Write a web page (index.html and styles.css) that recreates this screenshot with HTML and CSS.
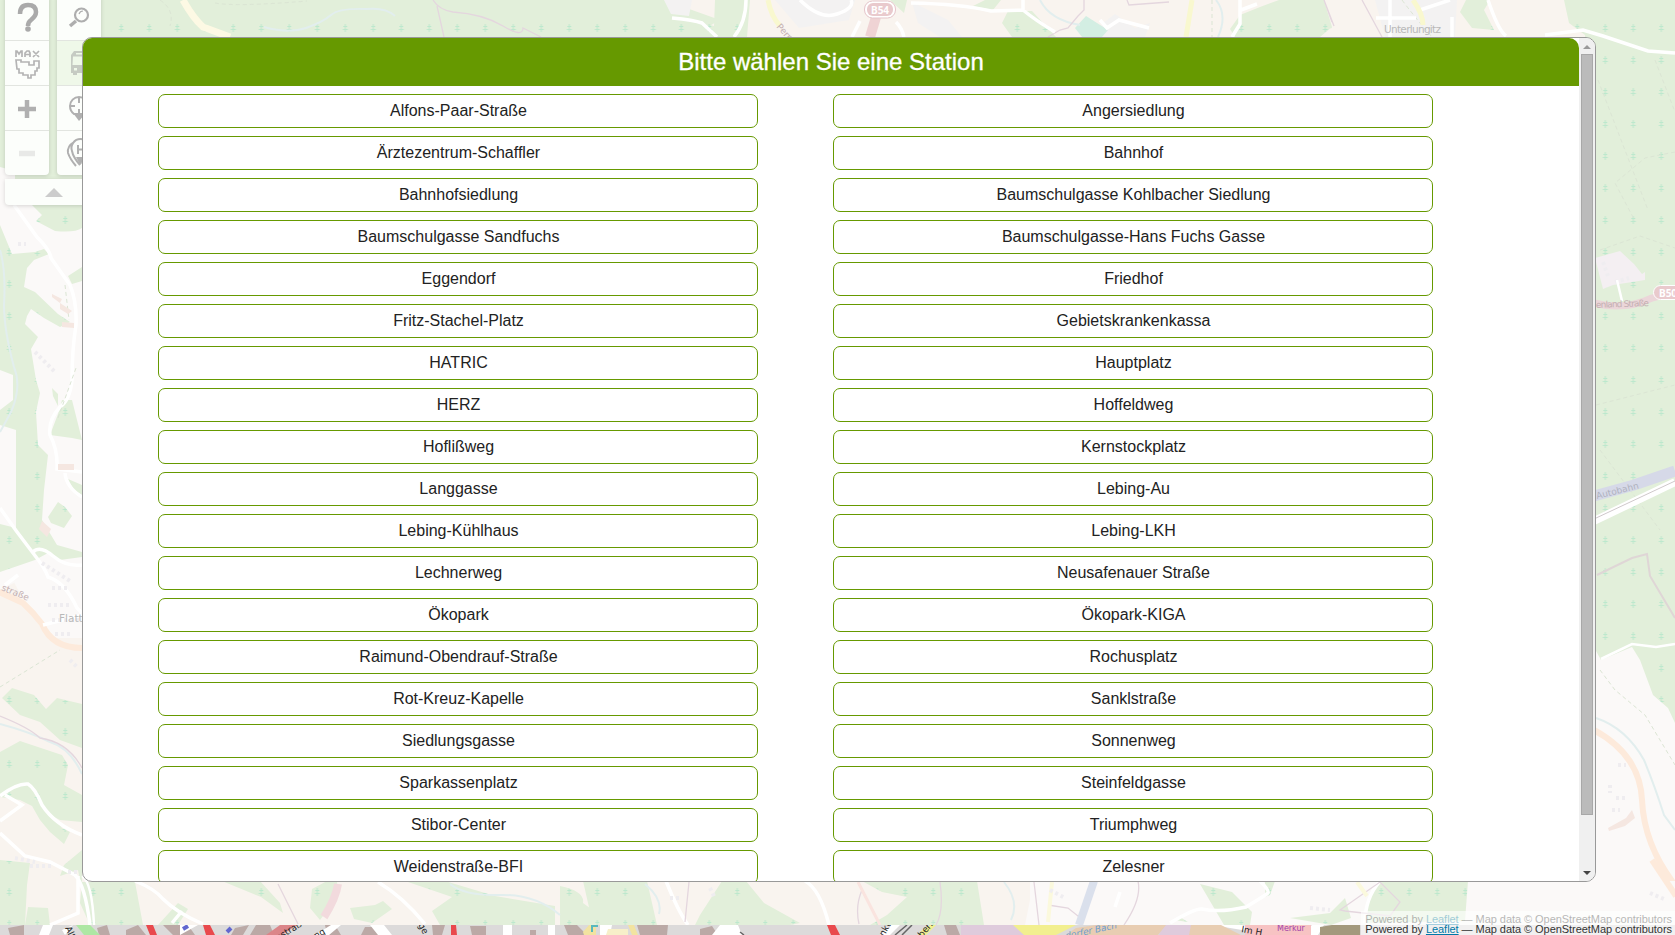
FILE: index.html
```html
<!DOCTYPE html>
<html lang="de">
<head>
<meta charset="utf-8">
<title>Bitte wählen Sie eine Station</title>
<link rel="stylesheet" href="styles.css">
</head>
<body>
<svg class="map" viewBox="0 0 1675 935" width="1675" height="935" aria-hidden="true">
  <defs>
    <pattern id="trees" width="28" height="32" patternUnits="userSpaceOnUse" x="-4.7" y="12">
      <rect width="28" height="32" fill="#e2efda"/>
      <path d="M14 12v8M12 14.500h4M11.500 17.500h5" stroke="#bce8cd" stroke-width="1" fill="none"/>
    </pattern>
    <clipPath id="strip"><rect y="925" width="1675" height="10"/></clipPath>
  </defs>
  <rect width="1675" height="935" fill="#fbf9f8"/>
  <rect y="870" width="1100" height="55" fill="#f9f4ef"/>
  <rect y="590" width="82" height="335" fill="#f9f4f0"/>

  <!-- top edge -->
  <path class="wood" d="M0 0H720L716 30L690 37V60H82V180H0Z"/>
  <path class="field" d="M664 0H1120L1300 0H1566L1572 24L1590 37H690L720 20Z"/>
  <path class="town" d="M664 0l7 14 18 2 3-16zM775 0h80l-6 20-50 8zM912 2l36 18 14 17h-22l-22-14zM1115 14l20 14 15-5-5 14h-48l6-14zM1375 0h82l-2 37h-70z"/>
  <path class="wood" d="M715 0h35l-3 37h-67l12-17 22 6zM907 0l-3 13-14-13zM985 0h16l-8 10-20-4zM1008 11h24l24 26h-44l-10-14zM1240 15l20-8 19-7h45l8 27-12 10h-85l-5-8zM1300 0h22l10 28-32 9zM1466 0h24l-6 10 10 20-22-2-12-16zM1564 0h111v180h-90V35l-16-12z"/>
  <path d="M1086 16l22 14-6 7h-20l-7-9z" fill="#d3eee3"/>
  <path class="path" d="M160 0q15 10 10 26M215 3q20 4 92-2M1402 0q15 20 30 37M1212 0v37"/>
  <path class="water" d="M264 27q25 7 42 1t25-13 35-6q20-2 29 7M1040 0q10 20 40 25M1216 0q12 15 2 37"/>
  <path class="track" d="M433 0q6 10 20 12 30 2 50 14t20 2l18 9M437 6l7 31M1084 0v10l-6 6-10 12-8 2-12 7M1127 0l2 5 40-3M1324 0l10 26M1324 0l8 22M1362 0l20 37"/>
  <path class="road" d="M672 18q22 2 30 5l15 14M746 0q0 22-12 37M860 21l-8 16M800 0q20 20 37 14 18-6 14-14M896 22q6 6 8 15M911 3q50 1 80 8l32-1V0M1023 10q12 10 32 22M1100 20l7 8 12-8 30 8M1240 0v24l-8 13M1241 10l16-6M1376 18h40M1390 0v37M1452 17v20M1420 10l30-10M1488 0q10 30 18 36M1545 35l38-5 20 6 45 15 27 2"/>
  <path d="M183 0q10 18 20 27l27 10" fill="none" stroke="#fdf9e4" stroke-width="7"/>
  <path d="M768 0q3 16 12 26M1192 0l-6 37M1413 0q10 14 10 25" fill="none" stroke="#f9f8cf" stroke-width="5"/>
  <path d="M876 17l-6 20" stroke="#efd3d4" stroke-width="10"/>
  <rect x="864.500" y="1" width="31" height="17" rx="8" fill="#fff" stroke="#e5c5ca"/>
  <rect x="867" y="3" width="26" height="13" rx="6" fill="#e9cacd"/>
  <text class="shield" x="871" y="13.500">B54</text>
  <text class="place" x="1384" y="32.500" textLength="57">Unterlungitz</text>
  <text class="street" x="776" y="27" transform="rotate(48 776 27)">Pernau</text>

  <!-- left edge -->
  <path class="plain" d="M0 167L15 171V205L36 205L43 222L82 240V590H0Z"/>
  <path class="wood" d="M45 205L82 205V228Q75 233 55 231L36 221L42 215L32 205ZM0 225L12 254L35 252L44 249L49 254L34 260L27 268L24 287L35 292L58 314L70 322L60 327L44 318L31 309L27 316L25 324L38 337L31 349L36 380L40 393L36 412L38 445L48 455L44 490L42 520L57 545L82 552V557L60 560L48 553L35 560L0 572V524L16 528V430L0 425V410L13 400V375L0 370ZM82 267L68 276L72 284L82 281ZM82 440L72 400L62 400L58 414L50 435L72 438ZM82 485L68 479L74 490L82 495ZM48 517L58 502L65 507L72 516L64 528L51 523ZM52 388l6 6v12l-5-10z"/>
  <path class="field" d="M0 590l20-10 62 58v287H0z"/>
  <path class="plain" d="M10 575L35 563L82 570V638H48L30 612Z"/>
  <path class="wood" d="M2 698L12 688L34 695L46 709L57 698L82 704V748L60 740L40 722L20 715ZM0 752L20 741L62 755L68 765L64 785L82 795V822L60 820L44 812L30 805L20 800L0 797ZM32 806L46 808L62 828L70 832L64 844L50 832L40 820ZM0 860L30 863L27 885L25 925H0ZM82 850v40L78 870L60 876L64 865Z"/>
  <path class="wood" d="M82 882h53l8 43H90l-10-22zM28 907l20 1 2 17H25z"/>
  <path class="street-major" d="M-5 590L23 603Q33 612 42 624Q52 648 82 648"/>
  <path class="road" d="M14 205L37 237Q50 250 51 258L70 285Q77 302 76 325Q72 350 72 380Q70 400 60 407Q48 420 50 435Q58 450 57 469L82 472M65 473Q66 487 82 497M0 508Q15 530 33 553Q45 568 48 577Q65 582 77 608L82 613M33 552Q40 545 53 556T82 565M5 585l13-10M43 625l39-10M0 796Q17 783 28 784Q35 788 42 805Q55 825 82 835M5 795l17 10-22 16M0 833L25 856 50 862 75 875Q85 885 90 925M78 876v37L50 925"/>
  <path class="road thin" d="M82 876q10 6 12 49"/>
  <path class="water" d="M0 250q6 20 4 55 0 25 10 62 8 20-3 45L0 432M0 724q30 8 50 18 20 6 32 32"/>
  <path class="track" d="M0 716q30 12 40 22 28 4 42 30"/>
  <path class="path" d="M0 687l60-37M58 418l18-50M65 285l4 35"/>
  <path class="house" d="M52 294l10 5-2 4-8-6zM60 303l12 8-4 3-8-5zM62 322l12 1v5l-12-1zM58 464h16v6H58zM42 521l9 8-4 8-8-8z"/>
  <path class="blocks" d="M35 352l20 20M18 244h8M42 563l28 18M52 588h16M48 605h24M52 620h28M55 634h15M70 660l8 8M15 858l20 4M30 866h24M68 872h12"/>
  <text class="street" x="1" y="590" transform="rotate(22 1 590)">straße</text>
  <text class="place" x="59" y="622">Flatte</text>

  <!-- right edge -->
  <path class="wood" d="M1560 60H1675V723L1668 708L1653 695L1640 660L1632 647L1601 660L1590 640Z"/>
  <path class="path" d="M1598 80l50 130M1655 60l20 52M1675 152l-30 6-30 25 20 38M1596 405l79-20M1600 450l60 80M1600 670l15 20 30 25 30 50M1600 250l40-14 35 12"/>
  <path d="M1595 258l25-7 14 13 8 10 3-2v8l-32 5-10 4z" fill="#f4eff2"/>
  <path class="blocks" d="M1603 262l5 14M1615 282l14-4"/>
  <path d="M1617 280l5 21" class="road thin"/>
  <path d="M1594 303q30 8 58-5l23-6" fill="none" stroke="#ebd6d9" stroke-width="7"/>
  <rect x="1653.500" y="285.500" width="34" height="14" rx="7" fill="#e9cacd" stroke="#fff"/>
  <text class="shield" x="1659" y="297">B50</text>
  <text class="street" x="1596" y="307" textLength="53" transform="rotate(-2 1622 305)">enland Straße</text>
  <path d="M1594 521l81-39" stroke="#fff" stroke-width="8"/>
  <path d="M1594 519l81-38" stroke="#cfc8cb"/>
  <path d="M1594 496l40-11 41-14" stroke="#d6d9e8" stroke-width="11" fill="none"/>
  <text class="street motor" x="1597" y="499" transform="rotate(-14 1597 499)">Autobahn</text>
  <path class="track wide" d="M1597 575l35-17 15-4 3 22 25 42"/>
  <path class="road thin" d="M1601 659l31-15 24 3 19-3"/>
  <path class="water" d="M1596 718q30 10 48 42 10 24 20 55l11 15"/>
  <path class="street-major" d="M1594 730Q1640 755 1642 800Q1644 845 1675 885"/>
  <path class="house" d="M1608 828l18-10 6-8 3 8-10 8-16 5z"/>
  <path class="blocks" d="M1610 785v8M1616 798h12M1612 810h8M1618 765h8M1665 893l8-4"/>

  <!-- bottom edge -->
  <path class="wood" d="M222 881h38l20 22 3 10-22-16zM312 889l15-8h10l1 15-18 24-10-12zM158 925l20-22 10 6-10 16zM350 908l25-3 8-4 9 8-20 14-18-4zM405 881h40l50 15 60 10v19H440l-8-14 20-14zM560 886q25 5 23 17l30 22h-53zM583 881h64l10 44h-64zM700 915l22-34h24l18 22 36 20-10 2h-95zM862 881h115l7 44H870l17-10 20-18-25-5zM1200 884l32 8 20 20-2 13h-26zM1155 905l18-3 2 12 13 8-14-2zM1380 881h88l-3 40-100 2q0-26 15-42zM1290 918l40-5 15-15 6 20-20 7zM1265 881h10l-5 14-5 2z"/>
  <path class="plain" d="M1030 881h165l-20 44h-150l5-25zM1470 881h205v44h-205z"/>
  <path class="road" d="M135 881q20 8 28 18 14 14 40 25M378 882q25 15 47 42M666 881q12 30 22 44M805 881q15 8 24 44M1115 907l5-15M1170 923q25-15 32-14 18 4 44-2 20-12 22-14t-8-12M1365 923q0-25 15-42M172 923l10-12"/>
  <path class="track" d="M278 884l20 40M689 882l-4 40M940 882q4 30-4 43M1034 882l5 43M862 890q-7 16-3 34M1138 881q4 18-14 44M1048 905l20 3 15 12M1340 910l40-28 20 20-10 14-45-5z"/>
  <path class="water" d="M450 884q15 12 50 11t60 20M645 884q18 15 14 30M1004 882q16 20 7 38"/>
  <path d="M338 884q-2 14-14 33" fill="none" stroke="#f2dadd" stroke-width="8"/>
  <path d="M858 882l22 43" stroke="#fae4df" stroke-width="3"/>
  <path d="M1094 881l-15 44" stroke="#dae0ec" stroke-width="8"/>
  <path class="street-major" d="M1652 860l24 36"/>
  <path d="M1052 882l-4 40M1357 882l10 14" stroke="#fbf9dd" stroke-width="4"/>
  <path class="blocks" d="M670 898h12M710 888l5 10M1050 890l15 8M1650 893l14 6M1310 908l20 2"/>

  <!-- unveiled strip below the overlay -->
  <g clip-path="url(#strip)">
    <rect y="925" width="1675" height="10" fill="#dcdada"/>
    <path fill="#bba9a6" d="M8 928l16-3v10H10zM97 928l10-3 3 10H99zM126 930l12-5 8 10h-20zM163 925h25l7 10h-22zM235 928l14-3-6 10h-12zM256 925h14l4 10h-24zM325 925h10l6 10h-14zM365 927h20v8h-24zM432 925h13l-3 10h-9zM470 926h16v9h-14zM530 930h6v5h-6zM564 925h13l10 10h-19zM637 925h31l-1 10h-27zM700 929l12-3 6 9h-18zM944 925h12l4 10h-13z"/>
    <path fill="#fff" d="M43 925h10l-4 10H39zM62 930l11-5-8 10zM180 925h18l-18 10zM370 925h14l8 10h-14zM503 925h9v10h-9zM315 935l16-10h10l-12 10zM548 925h7v10h-7zM600 925h12l-2 10h-10zM720 925h18l4 10h-30zM890 925h10l-10 10h-10zM1212 925h30l60 10h-30zM1312 925h12l-6 10h-16z"/>
    <path fill="#aee7a4" d="M76 925h14l10 10H84z"/>
    <path fill="#f2e3a0" d="M583 932l6-7h7v10h-12zM628 925h6l4 10h-6z"/>
    <path fill="#f7efc9" d="M608 929h20v6h-22z"/>
    <path fill="#dfcbdc" d="M961 925h55v10h-55zM1004 925h20l8 10h-28zM1163 925h28v10h-32z"/>
    <path fill="#f2ef8f" d="M1013 925h63l-20 10h-32zM922 930l8-5h6l-10 10h-8z"/>
    <path fill="#e8cdb2" d="M1076 928l20-3h70l-8 10h-92zM1191 925h30l20 10h-52z"/>
    <path fill="#f7c3c3" d="M1245 925h66v10h-66z"/>
    <path fill="#a3997d" d="M1320 927l12-2h28v10h-40z"/>
    <path fill="#e9494d" d="M146 925h7l4 10h-7zM203 925h7l5 10h-9zM451 925h5l1 10h-6zM827 925h8l5 10h-9z"/>
    <path fill="#db8589" d="M280 925h17l-15 10h-16z"/>
    <path fill="none" stroke="#58b8bd" stroke-width="2" d="M592 932v-6h6"/>
    <path fill="none" stroke="#6267cf" stroke-width="4" d="M183 929l5-3M227 932l4-4"/>
    <path fill="none" stroke="#666" stroke-width="1.500" d="M895 935l12-10M902 935l10-10M740 932l4 3"/>
    <text class="ink" x="65" y="928" transform="rotate(65 65 928)">Alt</text>
    <text class="ink" x="278" y="941" transform="rotate(-32 278 941)">nstraß</text>
    <text class="ink" x="316" y="939" transform="rotate(-30 316 939)">ng</text>
    <text class="ink" x="418" y="925" transform="rotate(60 418 925)">ge</text>
    <text class="ink" x="884" y="937" transform="rotate(-60 884 937)">nkt</text>
    <text class="ink" x="922" y="938" transform="rotate(-50 922 938)">bers</text>
    <text class="ink" x="1241" y="932" transform="rotate(10 1241 932)">Im H</text>
    <text class="ink river" x="1066" y="939" transform="rotate(-12 1066 939)">dorfer Bach</text>
    <text class="ink shop" x="1277" y="930.500">Merkur</text>
  </g>
</svg>

<aside class="tools">
  <div class="columns">
    <div class="column">
      <div class="tool"><svg viewBox="0 0 44 44"><path d="M15 18q0-9 8-9t8 7q0 4-5 8-3 2-3 6" fill="none" stroke="#aaa" stroke-width="4.500"/><circle cx="23" cy="33" r="2.800" fill="#aaa"/></svg></div>
      <div class="tool"><svg viewBox="0 0 44 44"><g fill="none" stroke="#b4b4b4" stroke-width="1.700"><path d="M11 16v-6h1l2 3 2-3h1v6M20 16v-4l2-2h2l1 2v4M20 13.500h5M28 10l6 6M34 10l-6 6"/><path d="M11 19h5v2h8v3h5v-4h5v7h-2v3h-2v4h-4v3h-3v-3h-5v-2h-4v-4h-2z"/></g></svg></div>
      <div class="tool"><svg viewBox="0 0 44 44"><path d="M13 23h18M22 14v18" stroke="#b0b0b0" stroke-width="4.500"/></svg></div>
      <div class="tool"><svg viewBox="0 0 44 44"><path d="M14 22.500h16" stroke="#e8e9e7" stroke-width="5.500"/></svg></div>
    </div>
    <div class="column">
      <div class="tool"><svg viewBox="0 0 44 44"><g fill="none" stroke="#aeaeae"><circle cx="24.500" cy="19" r="6.500" stroke-width="2.200"/><path d="M22 18q1-3 4-3" stroke-width="1.200"/><path d="M19 25l-6 5" stroke-width="3.500"/></g></svg></div>
      <div class="tool active"><svg viewBox="0 0 44 44"><path fill="#c6cbc3" fill-rule="evenodd" d="M17 10h16v22h-3v2h-4v-2h-6v2h-4v-2h-2V14zM19 12v1.500h12V12zM16 15.500h16v8.500H15.500zM17 27v2.500h3V27z"/></svg></div>
      <div class="tool"><svg viewBox="0 0 44 44"><path d="M13 20a9 9 0 1 1 18 0q0 5-4 8H17q-4-3-4-8zM22 11v6M13 20h5M22 23v5" fill="none" stroke="#b0b0b0" stroke-width="2"/><path d="M16 27h13l-7 8z" fill="#b0b0b0"/></svg></div>
      <div class="tool"><svg viewBox="0 0 44 44"><g fill="none" stroke="#b0b0b0" stroke-width="2"><path d="M17 11q-7 4-6 11 2 6 8 13M23 34q-7-8-8-14a9 9 0 1 1 17 0q-1 6-7 13"/><path d="M21 14v9M21 18.500h5M26 14v9"/></g><path d="M19 26h10l-6 8z" fill="#b0b0b0"/></svg></div>
    </div>
  </div>
  <div class="collapse"><svg viewBox="0 0 18 9"><path d="M0 9l9-9 9 9z" fill="#ccc"/></svg></div>
</aside>

<footer class="credits">
  <p class="credit veiled">Powered by <a>Leaflet</a> — Map data © OpenStreetMap contributors</p>
  <p class="credit">Powered by <a>Leaflet</a> — Map data © OpenStreetMap contributors</p>
</footer>

<main class="dialog">
  <div class="content">
    <h1 class="title">Bitte wählen Sie eine Station</h1>
    <div class="stations">
      <div class="station">Alfons-Paar-Straße</div><div class="station">Angersiedlung</div>
      <div class="station">Ärztezentrum-Schaffler</div><div class="station">Bahnhof</div>
      <div class="station">Bahnhofsiedlung</div><div class="station">Baumschulgasse Kohlbacher Siedlung</div>
      <div class="station">Baumschulgasse Sandfuchs</div><div class="station">Baumschulgasse-Hans Fuchs Gasse</div>
      <div class="station">Eggendorf</div><div class="station">Friedhof</div>
      <div class="station">Fritz-Stachel-Platz</div><div class="station">Gebietskrankenkassa</div>
      <div class="station">HATRIC</div><div class="station">Hauptplatz</div>
      <div class="station">HERZ</div><div class="station">Hoffeldweg</div>
      <div class="station">Hoflißweg</div><div class="station">Kernstockplatz</div>
      <div class="station">Langgasse</div><div class="station">Lebing-Au</div>
      <div class="station">Lebing-Kühlhaus</div><div class="station">Lebing-LKH</div>
      <div class="station">Lechnerweg</div><div class="station">Neusafenauer Straße</div>
      <div class="station">Ökopark</div><div class="station">Ökopark-KIGA</div>
      <div class="station">Raimund-Obendrauf-Straße</div><div class="station">Rochusplatz</div>
      <div class="station">Rot-Kreuz-Kapelle</div><div class="station">Sanklstraße</div>
      <div class="station">Siedlungsgasse</div><div class="station">Sonnenweg</div>
      <div class="station">Sparkassenplatz</div><div class="station">Steinfeldgasse</div>
      <div class="station">Stibor-Center</div><div class="station">Triumphweg</div>
      <div class="station">Weidenstraße-BFI</div><div class="station">Zelesner</div>
    </div>
  </div>
  <div class="scrollbar">
    <span class="arrow up"></span>
    <span class="thumb"></span>
    <span class="arrow down"></span>
  </div>
</main>
</body>
</html>
```

FILE: styles.css
```css
* { box-sizing: border-box; }

body {
  margin: 0;
  width: 1675px;
  height: 935px;
  position: relative;
  overflow: hidden;
  font-family: "Liberation Sans", Arial, sans-serif;
}

/* map */
.map { display: block; }
.wood { fill: url(#trees); }
.field { fill: #f9f4ef; }
.plain { fill: #fbf9f8; }
.town { fill: #f3f2f2; }
.road, .path, .water, .track, .street-major, .blocks { fill: none; }
.road { stroke: #fff; stroke-width: 3.5; }
.road.thin { stroke-width: 2.5; }
.path { stroke: #dbe5d4; stroke-width: 1; stroke-dasharray: 4 3; }
.water { stroke: #e2eeee; stroke-width: 2; }
.track { stroke: #e4d6de; stroke-width: 1.3; }
.track.wide { stroke: #dfd6d6; stroke-width: 2; }
.street-major { stroke: #fdeadb; stroke-width: 6; }
.house { fill: #f5e7e1; }
.blocks { stroke: #efedf0; stroke-width: 4; stroke-dasharray: 3 3; }
.shield { font: bold 10px "Noto Sans", sans-serif; fill: #fff; }
.place { font: 10.5px "DejaVu Sans", sans-serif; fill: #b9b9b9; }
.street { font: 9px "DejaVu Sans", sans-serif; fill: #c4b0b2; }
.motor { fill: #b0b2bf; font-size: 9px; }
.ink { font: 9px "DejaVu Sans", sans-serif; fill: #222; }
.river { fill: #6f9fd0; font-style: italic; }
.shop { fill: #a23fa8; font-size: 8px; }

/* toolbar */
.tools {
  position: absolute;
  left: 5px;
  top: -4px;
  width: 98px;
  display: flex;
  flex-direction: column;
  gap: 4px;
}
.columns { display: flex; gap: 8px; }
.column, .collapse {
  background: #fcfefb;
  border-radius: 0 0 4px 4px;
  box-shadow: 0 1px 4px rgba(0, 0, 0, .15);
}
.column { width: 44px; overflow: hidden; }
.tool { height: 45px; border-bottom: 1px solid #e2e5e0; }
.tool:last-child { height: 44px; border-bottom: 0; }
.tool svg { display: block; width: 44px; height: 44px; }
.tool.active { background: #eff8e9; }
.collapse {
  height: 26px;
  display: flex;
  align-items: center;
  justify-content: center;
}
.collapse svg { width: 18px; height: 9px; }

/* map credits */
.credits {
  position: absolute;
  right: 0;
  bottom: 0;
  width: 314px;
  height: 24px;
  padding: 3px 3px 0 0;
  background: rgba(255, 255, 255, .6);
  overflow: hidden;
  text-align: right;
}
.credit {
  margin: 0;
  height: 10px;
  line-height: 11px;
  font-size: 11px;
  letter-spacing: -.05px;
  color: #333;
  white-space: nowrap;
}
.credit a { color: #0078a8; text-decoration: underline; }
.veiled { opacity: .35; }

/* dialog */
.dialog {
  position: absolute;
  left: 82px;
  top: 37px;
  width: 1514px;
  height: 845px;
  display: flex;
  background: #fff;
  border: 1px solid #999;
  border-radius: 10px;
  overflow: hidden;
}
.content { width: 1496px; overflow: hidden; }
.title {
  margin: 0;
  height: 48px;
  line-height: 48px;
  background: #690;
  border-radius: 0 10px 0 0;
  color: #fff;
  font-size: 24px;
  font-weight: normal;
  text-align: center;
  -webkit-text-stroke: .3px #fff;
}
.stations {
  display: grid;
  grid-template-columns: 600px 600px;
  grid-auto-rows: 34px;
  column-gap: 75px;
  row-gap: 8px;
  padding: 8px 0 0 75px;
}
.station {
  border: 1px solid #690;
  border-radius: 7px;
  padding-left: 1px;
  line-height: 32px;
  font-size: 16px;
  color: #222;
  text-align: center;
}
.scrollbar {
  width: 16px;
  display: flex;
  flex-direction: column;
  align-items: center;
  background: #f0f0f0;
}
.thumb {
  width: 12px;
  height: 761px;
  margin-top: 5px;
  background: #bbb;
  border: 1px solid #a8a8a8;
}
.arrow {
  width: 0;
  border: 4px solid transparent;
}
.up { margin-top: 7px; border-top: 0; border-bottom-color: #999; }
.down { margin-top: auto; margin-bottom: 6px; border-bottom: 0; border-top-color: #444; }
```
